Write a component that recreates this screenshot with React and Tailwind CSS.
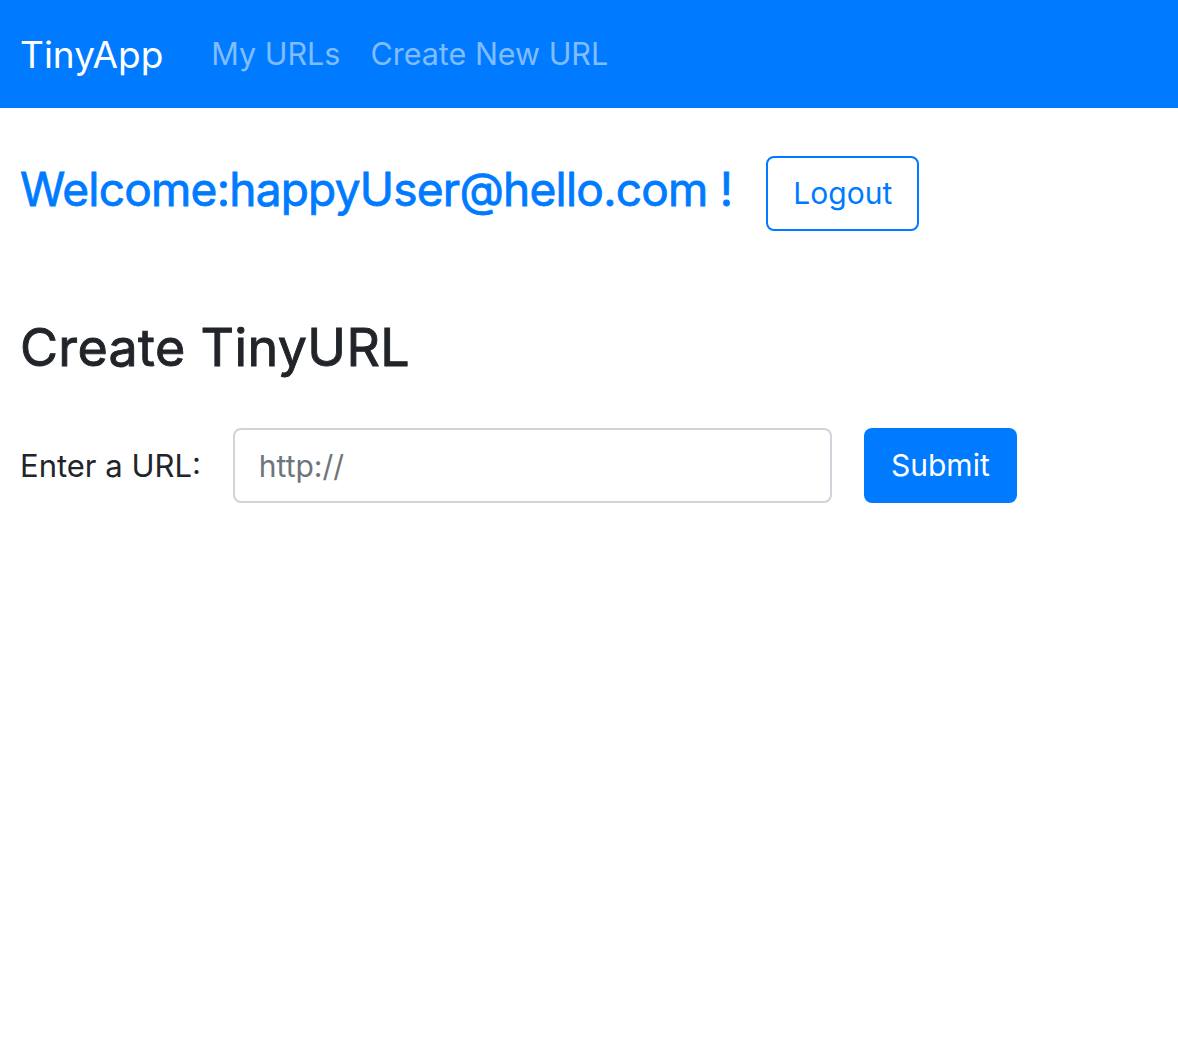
export default function App() {
  return (
    <div className="min-h-screen bg-white text-[#212529] font-['Inter','Liberation_Sans',sans-serif]">
      {/* Navbar */}
      <nav className="flex items-center h-[108px] px-[20px] bg-[#007bff]">
        <span className="text-[37px] text-white leading-none">TinyApp</span>
        <div className="flex items-center gap-[30px] ml-[48px]">
          <a className="text-[30.5px] leading-none text-[#80bdff]">My URLs</a>
          <a className="text-[30.5px] leading-none text-[#80bdff]">Create New URL</a>
        </div>
      </nav>

      <main className="px-[20px]">
        {/* Welcome row */}
        <div className="flex items-center gap-[34px] mt-[48px]">
          <h3 className="pb-[10px] text-[46px] font-normal leading-none tracking-[-0.75px] text-[#007bff] [-webkit-text-stroke:0.8px_#007bff]">
            Welcome:happyUser@hello.com !
          </h3>
          <button className="h-[75px] w-[153px] rounded-[8px] border-2 border-[#007bff] text-[30px] text-[#007bff]">
            Logout
          </button>
        </div>

        {/* Create TinyURL */}
        <h2 className="mt-[86px] text-[52px] font-normal leading-[1.2] tracking-[0.35px] [-webkit-text-stroke:0.9px_#212529]">
          Create TinyURL
        </h2>

        <form className="flex items-center gap-[32px] mt-[49px]">
          <label className="text-[31px]">Enter a URL:</label>
          <input
            type="text"
            placeholder="http://"
            className="h-[75px] w-[599px] rounded-[8px] border-2 border-[#ced4da] px-[24px] text-[30px] placeholder:text-[#6c757d] outline-none"
          />
          <button
            type="button"
            className="h-[75px] w-[153px] rounded-[8px] bg-[#007bff] text-[30px] text-white"
          >
            Submit
          </button>
        </form>
      </main>
    </div>
  )
}
